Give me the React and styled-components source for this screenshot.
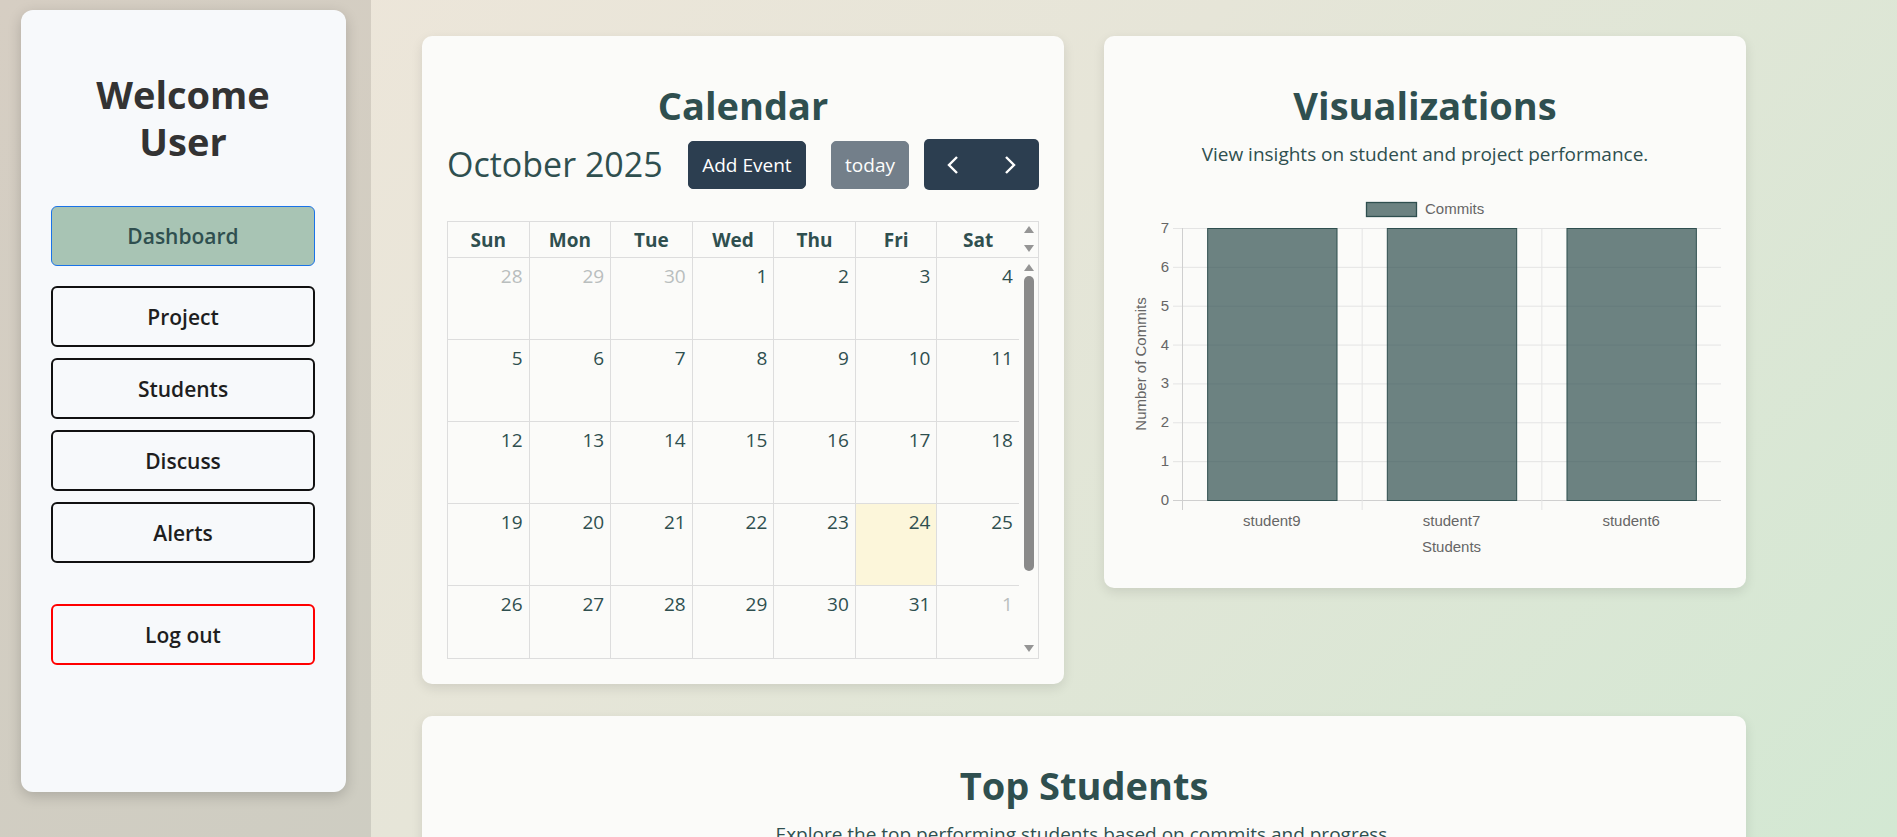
import React from "react";
import styled, { createGlobalStyle } from "styled-components";

const GlobalStyle = createGlobalStyle`
  * { box-sizing: border-box; }
  html, body {
    margin: 0;
    padding: 0;
    height: 100%;
    overflow: hidden;
  }
  body {
    font-family: "Open Sans", "Noto Sans", sans-serif;
    background: linear-gradient(135deg, #efe6da 0%, #e6e5d8 45%, #d3e8d3 100%);
  }
`;

const Page = styled.div`
  display: flex;
  height: 100vh;
`;

/* ---------- sidebar ---------- */

const SideColumn = styled.aside`
  width: 371px;
  flex-shrink: 0;
  background: rgba(0, 0, 0, 0.1);
  padding: 10px 25px 0 21px;
`;

const SideCard = styled.div`
  height: 782px;
  background: #f7f9fb;
  border-radius: 12px;
  box-shadow: 0 4px 14px rgba(0, 0, 0, 0.18);
  padding: 61px 31px 0 30px;
  display: flex;
  flex-direction: column;
`;

const Welcome = styled.h1`
  margin: 0 0 41px;
  font-size: 38px;
  line-height: 47px;
  font-weight: 700;
  color: #333;
  text-align: center;
`;

const NavList = styled.div`
  display: flex;
  flex-direction: column;
  gap: 11px;
`;

const NavButton = styled.button`
  width: 100%;
  height: ${(p) => (p.$active ? "60px" : "61px")};
  margin-bottom: ${(p) => (p.$active ? "9px" : "0")};
  margin-top: ${(p) => (p.$danger ? "30px" : "0")};
  border-radius: 6px;
  border: ${(p) =>
    p.$active
      ? "1px solid #1a73e8"
      : p.$danger
      ? "2px solid #ff0000"
      : "2px solid #111"};
  background: ${(p) => (p.$active ? "#a8c4b4" : "transparent")};
  color: ${(p) => (p.$active ? "#2f4f4f" : "#1e1e1e")};
  font-family: inherit;
  font-size: 21px;
  font-weight: 600;
  cursor: pointer;
`;

/* ---------- main area ---------- */

const Main = styled.main`
  flex: 1;
  padding: 36px 0 0 51px;
  overflow: hidden;
`;

const Grid = styled.div`
  display: grid;
  grid-template-columns: 642px 642px;
  column-gap: 40px;
  row-gap: 32px;
  align-items: start;
`;

const Card = styled.section`
  grid-column: ${(p) => (p.$wide ? "1 / -1" : "auto")};
  min-height: ${(p) => (p.$wide ? "320px" : "0")};
  background: #fbfbf9;
  border-radius: 10px;
  box-shadow: 0 4px 12px rgba(0, 0, 0, 0.1);
  padding: 25px;
`;

const CardTitle = styled.h2`
  margin: 20px 0 0;
  font-size: 38px;
  line-height: 48px;
  font-weight: 700;
  color: #2f4f4f;
  text-align: center;
`;

const CardText = styled.p`
  margin: 12px 0 0;
  font-size: 19px;
  line-height: 27px;
  color: #2f4f4f;
  text-align: center;
`;

/* ---------- calendar ---------- */

const Toolbar = styled.div`
  margin: 10px 0 31px;
  display: flex;
  align-items: center;
  justify-content: space-between;
`;

const MonthTitle = styled.h3`
  margin: 0;
  font-size: 34px;
  font-weight: 400;
  color: #2f4f4f;
  line-height: 1.2;
`;

const ToolGroup = styled.div`
  display: flex;
  align-items: center;
  gap: 15px;
`;

const FcButton = styled.button`
  height: 48px;
  padding: 0 13px;
  border: 1px solid #2c3e50;
  border-radius: 5px;
  background: #2c3e50;
  color: #fff;
  font-family: inherit;
  font-size: 19px;
  opacity: ${(p) => (p.$disabled ? 0.65 : 1)};
`;

const NavPair = styled.div`
  display: flex;
  height: 51px;
  border-radius: 5px;
  overflow: hidden;
  background: #2c3e50;
`;

const ArrowButton = styled.button`
  width: 57.5px;
  border: none;
  background: transparent;
  display: flex;
  align-items: center;
  justify-content: center;
  padding: 0;
`;

const CalTable = styled.div`
  border: 1px solid #ddd;
  display: flex;
  flex-direction: column;
`;

const CalSection = styled.div`
  display: flex;
  height: ${(p) => p.$h}px;
  border-bottom: ${(p) => (p.$head ? "1px solid #ddd" : "none")};
`;

const HeadRow = styled.div`
  flex: 1;
  display: grid;
  grid-template-columns: repeat(7, 1fr);
`;

const HeadCell = styled.div`
  border-right: ${(p) => (p.$last ? "none" : "1px solid #ddd")};
  display: flex;
  align-items: center;
  justify-content: center;
  font-size: 19px;
  font-weight: 700;
  color: #2f4f4f;
`;

const Weeks = styled.div`
  flex: 1;
  overflow: hidden;
`;

const WeekRow = styled.div`
  display: grid;
  grid-template-columns: repeat(7, 1fr);
  height: 82px;
  border-bottom: 1px solid #ddd;
`;

const DayCell = styled.div`
  border-right: ${(p) => (p.$last ? "none" : "1px solid #ddd")};
  background: ${(p) => (p.$today ? "#fcf6da" : "transparent")};
  padding: 5px 6px;
  text-align: right;
  font-size: 19px;
  line-height: 26px;
  color: ${(p) => (p.$muted ? "#b9bebe" : "#2f4f4f")};
`;

const ScrollTrack = styled.div`
  width: 19px;
  flex-shrink: 0;
  display: flex;
  flex-direction: column;
  align-items: center;
  justify-content: space-between;
  padding: ${(p) => (p.$head ? "4px 0 5px" : "6px 0 6px")};
`;

const Arrow = styled.span`
  width: 0;
  height: 0;
  border-left: 5px solid transparent;
  border-right: 5px solid transparent;
  border-bottom: ${(p) => (p.$down ? "none" : "7px solid #959595")};
  border-top: ${(p) => (p.$down ? "7px solid #959595" : "none")};
`;

const Thumb = styled.span`
  width: 10px;
  flex: 1;
  margin: 5px 0 74px;
  border-radius: 5px;
  background: #8a8a8a;
`;

/* ---------- chart ---------- */

const ChartBox = styled.div`
  margin-top: 15px;
  height: 380px;
`;

const weeks = [
  [28, 29, 30, 1, 2, 3, 4],
  [5, 6, 7, 8, 9, 10, 11],
  [12, 13, 14, 15, 16, 17, 18],
  [19, 20, 21, 22, 23, 24, 25],
  [26, 27, 28, 29, 30, 31, 1],
];
const dayNames = ["Sun", "Mon", "Tue", "Wed", "Thu", "Fri", "Sat"];

const Chevron = ({ left }) => (
  <svg width="12" height="20" viewBox="0 0 12 20">
    <polyline
      points={left ? "10,2 2,10 10,18" : "2,2 10,10 2,18"}
      fill="none"
      stroke="#fff"
      strokeWidth="2.4"
    />
  </svg>
);

const Calendar = () => (
  <Card>
    <CardTitle>Calendar</CardTitle>
    <Toolbar>
      <MonthTitle>October 2025</MonthTitle>
      <FcButton>Add Event</FcButton>
      <ToolGroup>
        <FcButton $disabled>today</FcButton>
        <NavPair>
          <ArrowButton>
            <Chevron left />
          </ArrowButton>
          <ArrowButton>
            <Chevron />
          </ArrowButton>
        </NavPair>
      </ToolGroup>
    </Toolbar>
    <CalTable>
      <CalSection $head $h={36}>
        <HeadRow>
          {dayNames.map((d, i) => (
            <HeadCell key={d} $last={i === 6}>
              {d}
            </HeadCell>
          ))}
        </HeadRow>
        <ScrollTrack $head>
          <Arrow />
          <Arrow $down />
        </ScrollTrack>
      </CalSection>
      <CalSection $h={400}>
        <Weeks>
          {weeks.map((w, wi) => (
            <WeekRow key={wi}>
              {w.map((d, i) => (
                <DayCell
                  key={i}
                  $last={i === 6}
                  $muted={(wi === 0 && d > 20) || (wi === 4 && d < 10)}
                  $today={wi === 3 && d === 24}
                >
                  {d}
                </DayCell>
              ))}
            </WeekRow>
          ))}
        </Weeks>
        <ScrollTrack>
          <Arrow />
          <Thumb />
          <Arrow $down />
        </ScrollTrack>
      </CalSection>
    </CalTable>
  </Card>
);

const students = [
  { name: "student9", commits: 7 },
  { name: "student7", commits: 7 },
  { name: "student6", commits: 7 },
];

const CommitsChart = () => {
  const left = 53;
  const right = 592;
  const top = 45;
  const bottom = 317;
  const max = 7;
  const y = (v) => bottom - (v / max) * (bottom - top);
  const cat = (right - left) / students.length;
  const barW = cat * 0.72;
  const ticks = [0, 1, 2, 3, 4, 5, 6, 7];
  const font = '"Liberation Sans", Arial, sans-serif';

  return (
    <svg width="592" height="380" viewBox="0 0 592 380">
      <rect x="237.5" y="19.5" width="50" height="14" fill="rgba(47,79,79,0.7)" stroke="#2f4f4f" strokeWidth="1.3" />
      <text x="296" y="27" fontFamily={font} fontSize="15" fill="#666" dominantBaseline="middle">
        Commits
      </text>

      {ticks.map((t) => (
        <g key={t}>
          <line x1={left - 9} x2={right} y1={y(t) + 0.5} y2={y(t) + 0.5} stroke={t === 0 ? "#cfcfcf" : "#e4e4e4"} />
          <text x="40" y={y(t) + 1} fontFamily={font} fontSize="15" fill="#666" textAnchor="end" dominantBaseline="middle">
            {t}
          </text>
        </g>
      ))}

      {students.map((s, i) => (
        <line key={s.name} x1={left + i * cat + 0.5} x2={left + i * cat + 0.5} y1={top} y2={bottom + 10} stroke={i === 0 ? "#cfcfcf" : "#e4e4e4"} />
      ))}

      {students.map((s, i) => {
        const x = left + i * cat + (cat - barW) / 2;
        return (
          <g key={s.name}>
            <rect x={x + 0.5} y={y(s.commits) + 0.5} width={barW} height={bottom - y(s.commits)} fill="rgba(47,79,79,0.7)" stroke="#2f4f4f" strokeWidth="1" />
            <text x={left + i * cat + cat / 2} y="339" fontFamily={font} fontSize="15" fill="#666" textAnchor="middle" dominantBaseline="middle">
              {s.name}
            </text>
          </g>
        );
      })}

      <text x={(left + right) / 2} y="365" fontFamily={font} fontSize="15" fill="#666" textAnchor="middle" dominantBaseline="middle">
        Students
      </text>
      <text
        x="13"
        y="181"
        fontFamily={font}
        fontSize="15"
        fill="#666"
        textAnchor="middle"
        dominantBaseline="middle"
        transform="rotate(-90 13 181)"
      >
        Number of Commits
      </text>
    </svg>
  );
};

export default function App() {
  return (
    <>
      <GlobalStyle />
      <Page>
        <SideColumn>
          <SideCard>
            <Welcome>
              Welcome
              <br />
              User
            </Welcome>
            <NavList>
              <NavButton $active>Dashboard</NavButton>
              <NavButton>Project</NavButton>
              <NavButton>Students</NavButton>
              <NavButton>Discuss</NavButton>
              <NavButton>Alerts</NavButton>
              <NavButton $danger>Log out</NavButton>
            </NavList>
          </SideCard>
        </SideColumn>
        <Main>
          <Grid>
            <Calendar />
            <Card>
              <CardTitle>Visualizations</CardTitle>
              <CardText>View insights on student and project performance.</CardText>
              <ChartBox>
                <CommitsChart />
              </ChartBox>
            </Card>
            <Card $wide>
              <CardTitle>Top Students</CardTitle>
              <CardText>Explore the top performing students based on commits and progress.</CardText>
            </Card>
          </Grid>
        </Main>
      </Page>
    </>
  );
}
